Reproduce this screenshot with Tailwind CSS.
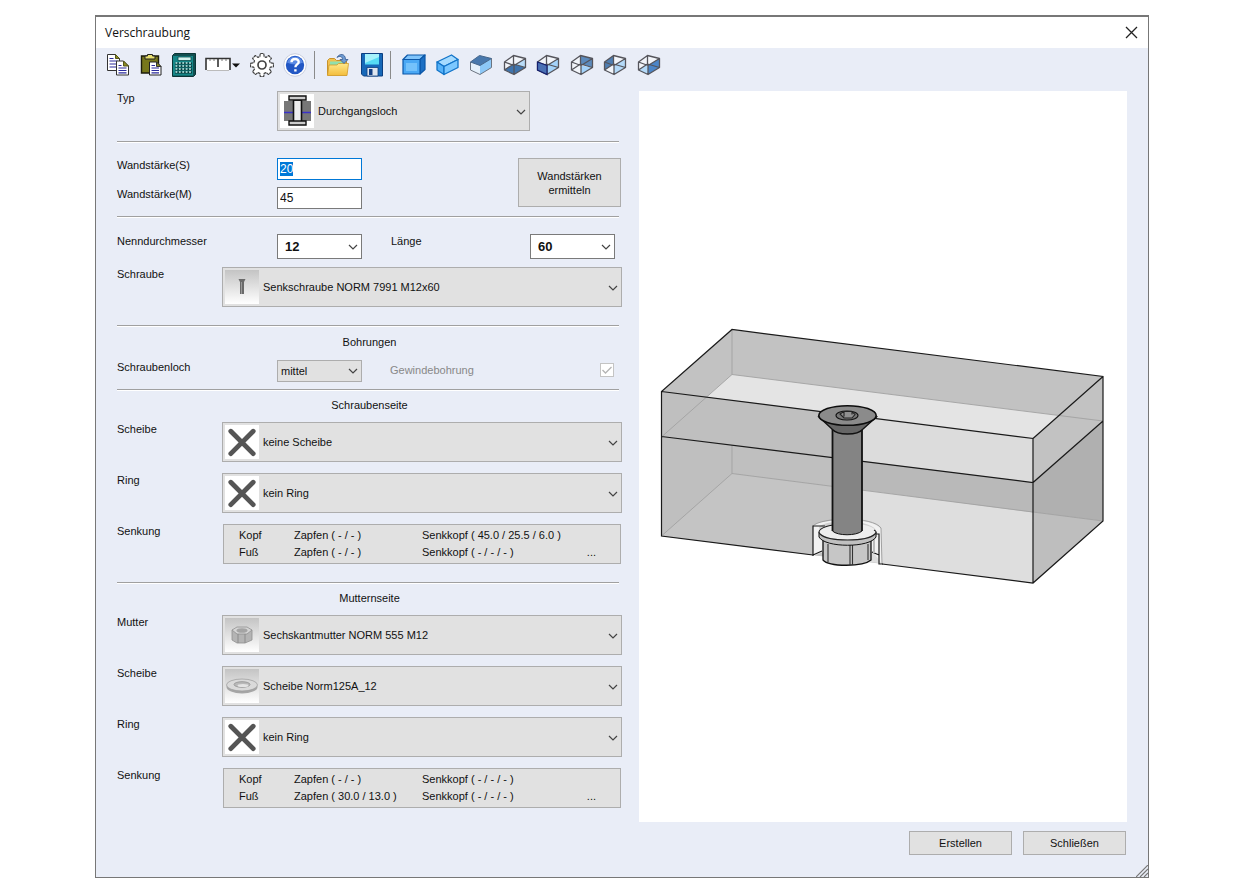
<!DOCTYPE html>
<html lang="de">
<head>
    <meta charset="UTF-8">
    <meta name="viewport" content="width=device-width, initial-scale=1.0">
    <title>Verschraubung</title>
    <script src="https://cdn.jsdelivr.net/npm/@tailwindcss/browser@4"></script>
</head>
<body class="bg-white font-['Liberation_Sans',sans-serif] text-[11px] leading-[14px] text-[#111]">

    <!-- Shared shapes -->
    <svg class="absolute size-0" aria-hidden="true">
        <defs>
            <linearGradient id="thumbBg" x1="0" y1="0" x2="0" y2="1">
                <stop offset="0" stop-color="#c4c4c4"/>
                <stop offset="1" stop-color="#fff"/>
            </linearGradient>
            <linearGradient id="folderFace" x1="0" y1="0" x2="0" y2="1">
                <stop offset="0" stop-color="#ffe88a"/>
                <stop offset="1" stop-color="#f3bd3c"/>
            </linearGradient>
            <symbol id="chevron" viewBox="0 0 10 6"><path d="M1 1l4 4 4-4" fill="none" stroke="#444" stroke-width="1.2"/></symbol>
            <symbol id="cross" viewBox="0 0 35 35">
                <rect width="35" height="35" fill="#fff"/>
                <path d="M6 6.500l23 23M29 6.500l-23 23" stroke="#555" stroke-width="5" stroke-linecap="round"/>
            </symbol>
            <symbol id="wire" viewBox="0 0 24 24">
                <path d="M1.500 9l9-6.500 12 3L11 12.500zM1.500 9v8l9.500 4.500v-9M22.500 5.500v9L11 21.500M10.500 2.500V11l12 3.500M10.500 11l-9 6" fill="none" stroke="#55555c" stroke-width="1.300" stroke-linejoin="round"/>
            </symbol>
        </defs>
    </svg>

    <div class="flex min-h-screen flex-col px-[95px] py-[15px]">
        <div class="relative flex flex-1 flex-col border border-t-2 border-[#777] bg-[#e9edf7]">

            <!-- Title bar -->
            <header class="flex h-[31px] items-center justify-between bg-white px-[9px]">
                <h1 class="font-['Open_Sans',sans-serif] text-[12px]">Verschraubung</h1>
                <button type="button" aria-label="Fenster schließen" class="p-px">
                    <svg class="size-[13px]" viewBox="0 0 13 13"><path d="M1 1l11 11M12 1L1 12" stroke="#222" stroke-width="1.300"/></svg>
                </button>
            </header>

            <!-- Toolbar -->
            <nav class="flex h-[33px] items-center pl-[10px]" aria-label="Werkzeuge">
                <div class="flex items-center gap-[9px]">
                    <button type="button" aria-label="Kopieren">
                        <svg class="size-6" viewBox="0 0 24 24">
                            <path d="M1.500 1.500h8l4 4v12h-12z" fill="#fff" stroke="#333"/>
                            <path d="M9.500 1.500l4 4h-4z" fill="#8c8c20" stroke="#55551a"/>
                            <path d="M3.500 5.500h4M3.500 8h8M3.500 11h8M3.500 14h8" stroke="#2a2a9c" stroke-width="1.200"/>
                            <path d="M10.500 8h7l5 5v9h-12z" fill="#fff" stroke="#333"/>
                            <path d="M17.500 8l5 5h-5z" fill="#8c8c20" stroke="#55551a"/>
                            <path d="M12.500 12.500h3M12.500 15h8M12.500 17.500h8M12.500 19.800h8" stroke="#2a2a9c" stroke-width="1.200"/>
                        </svg>
                    </button>
                    <button type="button" aria-label="Einfügen">
                        <svg class="size-6" viewBox="0 0 24 24">
                            <path d="M2.500 3h17v17h-17z" fill="#77771c" stroke="#1c1c0c" stroke-width="1.400"/>
                            <path d="M6 6V3h2.500V1.500h5V3H16v3z" fill="#e8e070" stroke="#222"/>
                            <path d="M10.500 9h7l4.500 4.500V22H10.500z" fill="#fff" stroke="#222"/>
                            <path d="M17.500 9v4.500H22z" fill="#8c8c20" stroke="#333"/>
                            <path d="M12.500 12.500h3.500M12.500 15h7.500M12.500 17.500h7.500M12.500 19.800h7.500" stroke="#2a2a9c" stroke-width="1.200"/>
                        </svg>
                    </button>
                    <button type="button" aria-label="Rechner">
                        <svg class="size-6" viewBox="0 0 24 24">
                            <path d="M2.500.5h21v21l-2 2H.5v-21z" fill="#124f50" stroke="#0b3536"/>
                            <path d="M1 3h20v19.500H1z" fill="#158788"/>
                            <path d="M6 4h13v3.500H6z" fill="#d4f4ee" stroke="#0c4c4c" stroke-width=".8"/>
                            <path d="M3 10.500h17M3 13.500h17M3 16.500h17M3 19.500h17" stroke="#07393a" stroke-width="2"/>
                            <path d="M3.500 10h17M3.500 13h17M3.500 16h17M3.500 19h17" stroke="#c5f3f0" stroke-width="1.300" stroke-dasharray="1.800 1.600"/>
                        </svg>
                    </button>
                    <button type="button" aria-label="Messen">
                        <svg class="h-6 w-9" viewBox="0 0 36 24">
                            <path d="M1 5h24v12H1z" fill="#fff"/>
                            <path d="M1 17V5.500h24V17M13 6v8" fill="none" stroke="#333" stroke-width="1.600"/>
                            <path d="M5 6v2M9 6v2M17 6v2M21 6v2" stroke="#777"/>
                            <path d="M2 17.500h22" stroke="#bbb"/>
                            <path d="M27 10.500h8l-4 4z" fill="#111"/>
                        </svg>
                    </button>
                    <button type="button" aria-label="Einstellungen">
                        <svg class="size-6" viewBox="0 0 24 24" fill="none" stroke="#444" stroke-width="1.200" stroke-linejoin="round">
                            <path d="M10.300 0.500h3.400l.5 3.100 1.800.8 2.600-1.900 2.800 2.800-1.900 2.600.8 1.900 3.200.5v3.400l-3.200.5-.8 1.900 1.900 2.600-2.800 2.800-2.600-1.900-1.800.8-.5 3.100h-3.400l-.5-3.100-1.800-.8-2.600 1.900-2.800-2.800 1.900-2.600-.8-1.900-3.200-.5v-3.400l3.200-.5.8-1.900-1.900-2.600 2.800-2.800 2.600 1.900 1.800-.8z" fill="#fff" stroke-dasharray="3 .6"/>
                            <circle cx="12" cy="12" r="4" stroke-width="1.700"/>
                        </svg>
                    </button>
                    <button type="button" aria-label="Hilfe">
                        <svg class="size-6" viewBox="0 0 24 24">
                            <circle cx="12" cy="12" r="11.300" fill="#fff" stroke="#c9cede"/>
                            <circle cx="12" cy="12" r="9.200" fill="#2257c4"/>
                            <path d="M4 9.500a8.500 8.500 0 0 1 16 0q-8 4-16 0z" fill="#5a8ae4"/>
                            <path d="M8.500 9.300c0-4.300 7.200-4.300 7.200-.3 0 2.400-3.300 2.500-3.300 5.200M12.400 16.300v2.300" fill="none" stroke="#fff" stroke-width="2.400"/>
                        </svg>
                    </button>
                </div>
                <div class="ml-[7px] h-7 w-px bg-[#8a8a8a]"></div>
                <div class="ml-[11px] flex items-center gap-[10px]">
                    <button type="button" aria-label="Öffnen">
                        <svg class="size-6" viewBox="0 0 24 24">
                            <path d="M1.500 22V7.500l2-2h5l2 2h10V22z" fill="#f0c050" stroke="#c8922a"/>
                            <path d="M4 8.500h15v5H4z" fill="#8fe0ae"/>
                            <path d="M1.500 22.500L3 12h8l1.500-1.500h10l-1.500 12z" fill="url(#folderFace)" stroke="#d09a2a" stroke-width=".8"/>
                            <path d="M11 4.500c2.500-4.500 8.500-4 8.500 2H22l-4 4-4-4h2.500c0-3-3-4-5.500-2z" fill="#6f9bd2" stroke="#34588f" stroke-width=".8"/>
                        </svg>
                    </button>
                    <button type="button" aria-label="Speichern">
                        <svg class="size-6" viewBox="0 0 24 24">
                            <path d="M1.500.5h21v22.500h-19l-2-2z" fill="#1768b8" stroke="#0c3f80"/>
                            <path d="M5 1h14v10.500H5z" fill="#57dcf4"/>
                            <path d="M5 1h14v3L5 10z" fill="#a5f2fb"/>
                            <path d="M7 14.500h11V23H7z" fill="#dfe6ef" stroke="#0c3f80" stroke-width=".8"/>
                            <path d="M9 16h3.500v6H9z" fill="#123f83"/>
                        </svg>
                    </button>
                </div>
                <div class="ml-[6px] h-7 w-px bg-[#8a8a8a]"></div>
                <div class="ml-[11px] flex w-[259px] items-center justify-between">
                    <button type="button" aria-label="Ansicht vorne">
                        <svg class="size-6" viewBox="0 0 24 24" stroke="#0b57a8" stroke-width="1.200" stroke-linejoin="round">
                            <path d="M1 6.500l4.500-4.500H23l-5 4.500z" fill="#7fc4fb"/>
                            <path d="M18 6.500L23 2v14.500L18 21z" fill="#1b6fc4"/>
                            <path d="M1 6.500h17V21H1z" fill="#4aa8f4"/>
                            <path d="M4 10h11v8H4z" fill="#74c2fb" stroke="none"/>
                        </svg>
                    </button>
                    <button type="button" aria-label="Ansicht isometrisch">
                        <svg class="size-6" viewBox="0 0 24 24" stroke="#1173c8" stroke-width="1.300" stroke-linejoin="round">
                            <path d="M1 9l14.500-7L22 6.500 8 13.500z" fill="#a5dbff"/>
                            <path d="M1 9l7 4.500v8L1 17z" fill="#56b2f8"/>
                            <path d="M8 13.500l14-7v8l-14 7z" fill="#7cc8ff"/>
                        </svg>
                    </button>
                    <button type="button" aria-label="Ansicht oben">
                        <svg class="size-6" viewBox="0 0 24 24">
                            <path d="M1.500 9l9.500 3.500v9L1.500 17z" fill="#e4f0fb"/>
                            <path d="M11 12.500l11.500-7v9L11 21.500z" fill="#8cc8f8"/>
                            <path d="M1.500 9v8l9.500 4.500 11.500-7v-9" fill="none" stroke="#6c7480"/>
                            <path d="M1.500 9l9-6.500 12 3L11 12.500z" fill="#4878ad" stroke="#46678c" stroke-linejoin="round"/>
                        </svg>
                    </button>
                    <button type="button" aria-label="Ansicht unten">
                        <svg class="size-6" viewBox="0 0 24 24">
                            <path d="M1.500 9l9-6.500 12 3v9L11 21.500 1.500 17z" fill="#f2f5fa"/>
                            <path d="M11 12.500l11.500-7v9L11 11z" fill="#b9dcf8"/>
                            <path d="M1.500 17l9-6 12 3.500-11.500 7z" fill="#3f74ad"/>
                            <use href="#wire"/>
                        </svg>
                    </button>
                    <button type="button" aria-label="Ansicht links vorne">
                        <svg class="size-6" viewBox="0 0 24 24">
                            <path d="M1.500 9l9-6.500 12 3v9L11 21.500 1.500 17z" fill="#f2f5fa"/>
                            <path d="M11 12.500l11.500-7v9L11 21.500z" fill="#a4d3fa"/>
                            <use href="#wire"/>
                            <path d="M1.500 9l9.500 3.500v9L1.500 17z" fill="#4a70b4" stroke="#16206e" stroke-width="1.200"/>
                        </svg>
                    </button>
                    <button type="button" aria-label="Ansicht hinten">
                        <svg class="size-6" viewBox="0 0 24 24">
                            <path d="M1.500 9l9-6.500 12 3v9L11 21.500 1.500 17z" fill="#f2f5fa"/>
                            <path d="M11 12.500l11.500 2-11.500 7z" fill="#a4d3fa"/>
                            <path d="M10.500 2.500l12 3v9l-12-3.500z" fill="#5c8abc"/>
                            <use href="#wire"/>
                        </svg>
                    </button>
                    <button type="button" aria-label="Ansicht links hinten">
                        <svg class="size-6" viewBox="0 0 24 24">
                            <path d="M1.500 9l9-6.500 12 3v9L11 21.500 1.500 17z" fill="#f2f5fa"/>
                            <path d="M11 12.500l11.500-7v9L11 21.500z" fill="#b4daf9"/>
                            <path d="M1.500 9l9-6.500V11l-9 6z" fill="#4f7eb2"/>
                            <use href="#wire"/>
                        </svg>
                    </button>
                    <button type="button" aria-label="Ansicht rechts">
                        <svg class="size-6" viewBox="0 0 24 24">
                            <path d="M1.500 9l9-6.500 12 3v9L11 21.500 1.500 17z" fill="#f2f5fa"/>
                            <path d="M1.500 17l9-6 .5 10.500z" fill="#b4daf9"/>
                            <path d="M11 12.500l11.500-7v9L11 21.500z" fill="#4c86c8"/>
                            <use href="#wire"/>
                        </svg>
                    </button>
                </div>
            </nav>

            <main class="flex flex-1 gap-[17px] px-[21px] pt-[10px]">

                <!-- Form -->
                <form class="w-[505px] shrink-0">
                    <div class="flex">
                        <label for="typ" class="w-[160px]">Typ</label>
                        <div class="relative w-[253px]">
                            <select id="typ" class="h-10 w-full appearance-none border border-[#adadad] bg-[#e1e1e1] pl-10">
                                <option>Durchgangsloch</option>
                            </select>
                            <svg class="pointer-events-none absolute top-[3px] left-[3px] size-[34px]" viewBox="0 0 34 34">
                                <rect width="34" height="34" fill="#fff"/>
                                <path d="M4 7h9v20H4zM22 7h9v20h-9z" fill="#777"/>
                                <path d="M4 18.500h9M22 18.500h9" stroke="#3a32c8" stroke-width="1.500"/>
                                <path d="M13.500 6h8v22h-8z" fill="#eee" stroke="#111" stroke-width="1.600"/>
                                <path d="M9 2h17v4H9zM9 27h17v4H9z" fill="#ccc" stroke="#111" stroke-width="1.400"/>
                            </svg>
                            <svg class="pointer-events-none absolute top-[18px] right-[4px] h-[6px] w-[10px]"><use href="#chevron"/></svg>
                        </div>
                    </div>

                    <hr class="mt-[10px] mr-[3px] h-[2px] border-t border-b border-t-[#a0a0a0] border-b-white">

                    <div class="mt-[15px] flex justify-between pr-px">
                        <div class="space-y-[7px]">
                            <div class="flex">
                                <label for="wandS" class="w-[160px]">Wandstärke(S)</label>
                                <input id="wandS" type="text" value="20" class="h-[22px] w-[85px] border border-[#0078d7] bg-white px-[2px] text-[12px] outline-none selection:bg-[#0078d7] selection:text-white">
                            </div>
                            <div class="flex">
                                <label for="wandM" class="w-[160px]">Wandstärke(M)</label>
                                <input id="wandM" type="text" value="45" class="h-[22px] w-[85px] border border-[#7a7a7a] bg-white px-[2px] text-[12px] outline-none">
                            </div>
                        </div>
                        <button type="button" class="h-[49px] w-[103px] border border-[#adadad] bg-[#e1e1e1] px-2">Wandstärken ermitteln</button>
                    </div>

                    <hr class="mt-[7px] mr-[3px] h-[2px] border-t border-b border-t-[#a0a0a0] border-b-white">

                    <div class="mt-4 flex">
                        <label for="durchmesser" class="w-[160px]">Nenndurchmesser</label>
                        <div class="relative w-[85px]">
                            <select id="durchmesser" class="h-[25px] w-full appearance-none border border-[#7a7a7a] bg-white pl-[7px] text-[13px] font-bold">
                                <option>12</option>
                            </select>
                            <svg class="pointer-events-none absolute top-[10px] right-[4px] h-[6px] w-[10px]"><use href="#chevron"/></svg>
                        </div>
                        <label for="laenge" class="ml-[29px] w-[139px]">Länge</label>
                        <div class="relative w-[85px]">
                            <select id="laenge" class="h-[25px] w-full appearance-none border border-[#7a7a7a] bg-white pl-[7px] text-[13px] font-bold">
                                <option>60</option>
                            </select>
                            <svg class="pointer-events-none absolute top-[10px] right-[4px] h-[6px] w-[10px]"><use href="#chevron"/></svg>
                        </div>
                    </div>
                    <div class="mt-2 flex">
                        <label for="schraube" class="w-[105px]">Schraube</label>
                        <div class="relative flex-1">
                            <select id="schraube" class="h-10 w-full appearance-none border border-[#adadad] bg-[#e1e1e1] pl-10">
                                <option>Senkschraube NORM 7991 M12x60</option>
                            </select>
                            <svg class="pointer-events-none absolute top-[3px] left-[3px] size-[34px]" viewBox="0 0 34 34">
                                <rect width="34" height="34" fill="url(#thumbBg)"/>
                                <path d="M13.500 9h7L19 12v12h-4V12z" fill="#6a6a6a"/>
                                <path d="M16.500 12v12" stroke="#999"/>
                            </svg>
                            <svg class="pointer-events-none absolute top-[18px] right-[4px] h-[6px] w-[10px]"><use href="#chevron"/></svg>
                        </div>
                    </div>

                    <hr class="mt-[18px] mr-[3px] h-[2px] border-t border-b border-t-[#a0a0a0] border-b-white">

                    <h2 class="mt-2 text-center">Bohrungen</h2>
                    <div class="mt-[11px] flex">
                        <label for="loch" class="w-[160px]">Schraubenloch</label>
                        <div class="relative w-[85px]">
                            <select id="loch" class="h-[22px] w-full appearance-none border border-[#adadad] bg-[#e1e1e1] pl-[3px]">
                                <option>mittel</option>
                            </select>
                            <svg class="pointer-events-none absolute top-[8px] right-[4px] h-[6px] w-[10px]"><use href="#chevron"/></svg>
                        </div>
                        <label for="gewinde" class="mt-[3px] ml-[28px] w-[210px] text-[#888]">Gewindebohrung</label>
                        <div class="relative mt-[3px] size-[14px]">
                            <input id="gewinde" type="checkbox" checked disabled class="block size-[14px] appearance-none border border-[#c4c4c4] bg-white">
                            <svg class="pointer-events-none absolute inset-0" viewBox="0 0 14 14"><path d="M2.500 7l3 3L11.500 4" fill="none" stroke="#b4b4b4" stroke-width="1.300"/></svg>
                        </div>
                    </div>

                    <hr class="mt-[7px] mr-[3px] h-[2px] border-t border-b border-t-[#a0a0a0] border-b-white">

                    <!-- Schraubenseite -->
                    <h2 class="mt-[7px] text-center">Schraubenseite</h2>
                    <div class="mt-[10px] space-y-[11px]">
                        <div class="flex">
                            <label for="scheibeS" class="w-[105px]">Scheibe</label>
                            <div class="relative flex-1">
                                <select id="scheibeS" class="h-10 w-full appearance-none border border-[#adadad] bg-[#e1e1e1] pl-10">
                                    <option>keine Scheibe</option>
                                </select>
                                <svg class="pointer-events-none absolute top-[3px] left-[3px] size-[34px]"><use href="#cross"/></svg>
                                <svg class="pointer-events-none absolute top-[18px] right-[4px] h-[6px] w-[10px]"><use href="#chevron"/></svg>
                            </div>
                        </div>
                        <div class="flex">
                            <label for="ringS" class="w-[105px]">Ring</label>
                            <div class="relative flex-1">
                                <select id="ringS" class="h-10 w-full appearance-none border border-[#adadad] bg-[#e1e1e1] pl-10">
                                    <option>kein Ring</option>
                                </select>
                                <svg class="pointer-events-none absolute top-[3px] left-[3px] size-[34px]"><use href="#cross"/></svg>
                                <svg class="pointer-events-none absolute top-[18px] right-[4px] h-[6px] w-[10px]"><use href="#chevron"/></svg>
                            </div>
                        </div>
                        <div class="flex">
                            <label for="senkungS" class="w-[106px]">Senkung</label>
                            <button id="senkungS" type="button" class="mr-px grid h-10 flex-1 grid-cols-[55px_128px_1fr_auto] content-center border border-[#adadad] bg-[#e1e1e1] pr-6 pl-[15px] text-left leading-[17px]">
                                <span>Kopf</span><span>Zapfen ( - / - )</span><span>Senkkopf ( 45.0 / 25.5 / 6.0 )</span><span></span>
                                <span>Fuß</span><span>Zapfen ( - / - )</span><span>Senkkopf ( - / - / - )</span><span>...</span>
                            </button>
                        </div>
                    </div>

                    <hr class="mt-[18px] mr-[3px] h-[2px] border-t border-b border-t-[#a0a0a0] border-b-white">

                    <!-- Mutternseite -->
                    <h2 class="mt-[7px] text-center">Mutternseite</h2>
                    <div class="mt-[10px] space-y-[11px]">
                        <div class="flex">
                            <label for="mutter" class="w-[105px]">Mutter</label>
                            <div class="relative flex-1">
                                <select id="mutter" class="h-10 w-full appearance-none border border-[#adadad] bg-[#e1e1e1] pl-10">
                                    <option>Sechskantmutter NORM 555 M12</option>
                                </select>
                                <svg class="pointer-events-none absolute top-[3px] left-[3px] size-[34px]" viewBox="0 0 34 34">
                                    <rect width="34" height="34" fill="url(#thumbBg)"/>
                                    <path d="M7 12v10l5 3h8l7-3V12z" fill="#b4b4b4" stroke="#909090" stroke-width=".8"/>
                                    <path d="M7 12l5-3h10l5 3-5 4H12z" fill="#d4d4d4" stroke="#909090" stroke-width=".8"/>
                                    <ellipse cx="17" cy="12.500" rx="5.500" ry="2.300" fill="#a4a4a4"/>
                                    <path d="M13 16v9M20 16v9" stroke="#8c8c8c"/>
                                </svg>
                                <svg class="pointer-events-none absolute top-[18px] right-[4px] h-[6px] w-[10px]"><use href="#chevron"/></svg>
                            </div>
                        </div>
                        <div class="flex">
                            <label for="scheibeM" class="w-[105px]">Scheibe</label>
                            <div class="relative flex-1">
                                <select id="scheibeM" class="h-10 w-full appearance-none border border-[#adadad] bg-[#e1e1e1] pl-10">
                                    <option>Scheibe Norm125A_12</option>
                                </select>
                                <svg class="pointer-events-none absolute top-[3px] left-[3px] size-[34px]" viewBox="0 0 34 34">
                                    <rect width="34" height="34" fill="url(#thumbBg)"/>
                                    <ellipse cx="17" cy="18" rx="15.500" ry="6.500" fill="#a6a6a6"/>
                                    <ellipse cx="17" cy="16" rx="15.500" ry="6" fill="#dadada" stroke="#999" stroke-width=".7"/>
                                    <ellipse cx="17" cy="15.500" rx="8" ry="2.800" fill="#b8b8b8" stroke="#909090" stroke-width=".8"/>
                                    <ellipse cx="18" cy="16.500" rx="5.500" ry="1.500" fill="#e4e4e4"/>
                                </svg>
                                <svg class="pointer-events-none absolute top-[18px] right-[4px] h-[6px] w-[10px]"><use href="#chevron"/></svg>
                            </div>
                        </div>
                        <div class="flex">
                            <label for="ringM" class="w-[105px]">Ring</label>
                            <div class="relative flex-1">
                                <select id="ringM" class="h-10 w-full appearance-none border border-[#adadad] bg-[#e1e1e1] pl-10">
                                    <option>kein Ring</option>
                                </select>
                                <svg class="pointer-events-none absolute top-[3px] left-[3px] size-[34px]"><use href="#cross"/></svg>
                                <svg class="pointer-events-none absolute top-[18px] right-[4px] h-[6px] w-[10px]"><use href="#chevron"/></svg>
                            </div>
                        </div>
                        <div class="flex">
                            <label for="senkungM" class="w-[106px]">Senkung</label>
                            <button id="senkungM" type="button" class="mr-px grid h-10 flex-1 grid-cols-[55px_128px_1fr_auto] content-center border border-[#adadad] bg-[#e1e1e1] pr-6 pl-[15px] text-left leading-[17px]">
                                <span>Kopf</span><span>Zapfen ( - / - )</span><span>Senkkopf ( - / - / - )</span><span></span>
                                <span>Fuß</span><span>Zapfen ( 30.0 / 13.0 )</span><span>Senkkopf ( - / - / - )</span><span>...</span>
                            </button>
                        </div>
                    </div>
                </form>

                <!-- 3D preview -->
                <section class="flex flex-1 items-center justify-center bg-white">
                    <svg class="w-[470px] shrink" viewBox="-1 2 470 290" role="img" aria-label="Vorschau der Verschraubung">
                        <path d="M12.500 81.500L83 19.500l371 47V211l-70 62L12.500 226z" fill="#c2c2c2"/>
                        <!-- parting plane seen from above -->
                        <path d="M83 64.500L454 111l-70 61.500L12.500 126.500z" fill="#e4e4e4"/>
                        <!-- front face, left and right of the bolt -->
                        <path d="M12.500 81.500L198 104.500V249L12.500 226z" fill="#bfbfbf"/>
                        <path d="M198 104.500l186 24v44L198 149z" fill="#dcdcdc"/>
                        <path d="M198 149l186 23.500v30L198 178z" fill="#b9b9b9"/>
                        <path d="M198 178l186 24.500V273l-186-24z" fill="#dedede"/>
                        <path d="M83 163.500L198 178v71L12.500 226z" fill="#c4c4c4"/>
                        <!-- right face -->
                        <path d="M384 128.500l70-62V111l-70 61.500z" fill="#c2c2c2"/>
                        <path d="M384 172.500l70-61.500v100l-70-9z" fill="#b0b0b0"/>
                        <path d="M384 202l70 9-70 62z" fill="#bebebe"/>
                        <!-- hidden edges -->
                        <path d="M83 20v44.500L454 111M83 64.500l-70 62M83 135v28.500L454 211M83 163.500l-70 62" fill="none" stroke="#a2a2a2" stroke-width=".9"/>
                        <!-- visible edges -->
                        <path d="M164 245L12.500 226V81.500L83 19.500l371 47V211l-70 62-151-19M12.500 81.500L384 128.500V273M384 128.500l70-62M12.500 126.500l371.500 46 70-61.500" fill="none" stroke="#1a1a1a" stroke-width="1.200"/>
                        <!-- counterbore -->
                        <path d="M164 246v-30c6-7 58-10 68 3l1 35-9-12h-50z" fill="#f2f2f2"/>
                        <path d="M170 217c6-7 48-9 57 3l-2 8h-52z" fill="#cfcfcf"/>
                        <path d="M164 216c8-9 60-10 68 2l1 36" fill="none" stroke="#999" stroke-width=".9"/>
                        <path d="M164 246v-30h12M164 245l9-4M222 224h8v30h4M223 242l7 3" fill="none" stroke="#1a1a1a" stroke-width="1.200"/>
                        <path d="M225 226v17" stroke="#bbb" stroke-width="2"/>
                        <!-- nut -->
                        <path d="M174 230v20c6 7 40 7 48 0v-20z" fill="#c6c6c6" stroke="#111" stroke-width="1.300"/>
                        <path d="M179 234v18M201 235v20M203.500 235v20M219 234v16" stroke="#333" stroke-width="1.100"/>
                        <!-- washer -->
                        <path d="M170 222v5c6 11 51 11 57 0v-5z" fill="#c0c0c0" stroke="#111"/>
                        <ellipse cx="198.500" cy="221.500" rx="28.500" ry="8" fill="#ededed"/>
                        <path d="M184 215c-12 2-16 6-13 9 8 8 47 8 55 0 2-2 1-3-1-4" fill="none" stroke="#222" stroke-width="1.100"/>
                        <!-- shank -->
                        <path d="M183.500 118v103c5 5 24 5 29.500 0V118z" fill="#848484"/>
                        <path d="M183.500 118v103M213 118v103" stroke="#111" stroke-width="1.800"/>
                        <path d="M183.500 221c5 5 24 5 29.500 0" fill="none" stroke="#111"/>
                        <!-- countersunk head -->
                        <path d="M170 107l13.500 12.500c5 6 25 6 30 0L227.500 107z" fill="#666" stroke="#111" stroke-width="1.300"/>
                        <ellipse cx="198.500" cy="105.500" rx="28.700" ry="9.800" fill="#8b8b8b" stroke="#0c0c0c" stroke-width="1.600"/>
                        <ellipse cx="198" cy="105.500" rx="11" ry="4.500" fill="#777" stroke="#111" stroke-width="1.100"/>
                        <path d="M191 104l4-2.500h8l3 3-3 3.500h-8zM195 101.500v5M203 101.500v3" fill="#909090" stroke="#222" stroke-width="1.100"/>
                    </svg>
                </section>
            </main>

            <footer class="flex justify-end gap-[11px] pt-[9px] pr-[22px] pb-[22px]">
                <button type="button" class="h-6 w-[103px] border border-[#adadad] bg-[#e1e1e1]">Erstellen</button>
                <button type="button" class="h-6 w-[103px] border border-[#adadad] bg-[#e1e1e1]">Schließen</button>
            </footer>

            <!-- Resize grip -->
            <svg class="absolute right-0 bottom-0 size-3" viewBox="0 0 12 12"><path d="M0 12L12 0M4 12l8-8M8 12l4-4" stroke="#777" stroke-width="1.200"/></svg>
        </div>
    </div>

    <script>
        document.addEventListener("DOMContentLoaded", () => {
            const wandS = document.getElementById("wandS");
            wandS.focus();
            wandS.select();
        });
    </script>
</body>
</html>
